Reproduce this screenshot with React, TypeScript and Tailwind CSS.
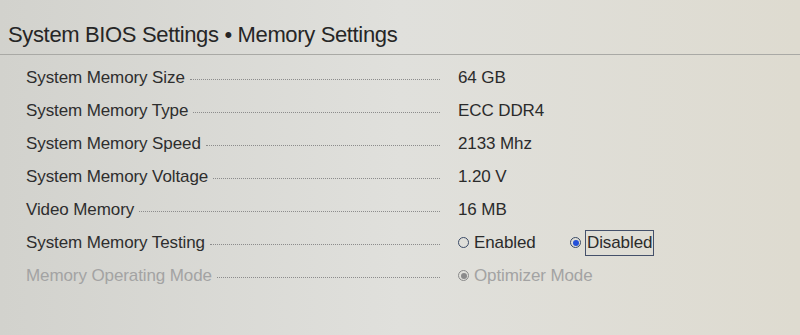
import React from "react";

type Row = { label: string; value?: string; kind?: "text" | "radio" | "disabled" };

const rows: Row[] = [
  { label: "System Memory Size", value: "64 GB" },
  { label: "System Memory Type", value: "ECC DDR4" },
  { label: "System Memory Speed", value: "2133 Mhz" },
  { label: "System Memory Voltage", value: "1.20 V" },
  { label: "Video Memory", value: "16 MB" },
  { label: "System Memory Testing", kind: "radio" },
  { label: "Memory Operating Mode", kind: "disabled" },
];

const Radio = ({ checked, muted }: { checked?: boolean; muted?: boolean }) => (
  <span
    className={
      "inline-flex items-center justify-center w-[11px] h-[11px] rounded-full border " +
      (muted ? "border-[#8a8a8a]" : "border-[#3a4a66]")
    }
  >
    {checked && (
      <span className={"w-[6px] h-[6px] rounded-full " + (muted ? "bg-[#8a8a8a]" : "bg-[#2450d8]")} />
    )}
  </span>
);

export default function App() {
  return (
    <div
      className="w-[800px] h-[335px] overflow-hidden bg-gradient-to-r from-[#d2d2cd] via-[#e0e0dc] to-[#dedbd0] text-[#2b2b2b]"
      style={{ fontFamily: '"Liberation Sans", Arial, sans-serif' }}
    >
      <div className="h-[55px] flex items-end pl-[8px] pb-[8px] border-b border-[#a9a9a5]">
        <h1 className="text-[22px] leading-none tracking-[-0.35px] text-[#262626]">
          System BIOS Settings • Memory Settings
        </h1>
      </div>
      <div className="pt-[6px] pl-[26px]">
        {rows.map((r) => {
          const muted = r.kind === "disabled";
          return (
            <div key={r.label} className="h-[33px] flex items-center text-[17px] tracking-[-0.1px]">
              <div className="w-[414px] flex items-center gap-[5px]">
                <span className={"whitespace-nowrap " + (muted ? "text-[#a3a3a3]" : "text-[#2e2e2e]")}>
                  {r.label}
                </span>
                <span className="flex-1 border-b border-dotted border-[#8c8c8c] translate-y-[2px]" />
              </div>
              <div className="pl-[18px] flex items-center">
                {r.kind === "radio" ? (
                  <div className="flex items-center">
                    <div className="flex items-center gap-[5px] w-[112px]">
                      <Radio />
                      <span>Enabled</span>
                    </div>
                    <div className="flex items-center gap-[4px]">
                      <Radio checked />
                      <span className="border border-[#44506a] px-[1px] leading-[24px] h-[26px]">Disabled</span>
                    </div>
                  </div>
                ) : muted ? (
                  <div className="flex items-center gap-[5px] text-[#a3a3a3]">
                    <Radio checked muted />
                    <span>Optimizer Mode</span>
                  </div>
                ) : (
                  <span>{r.value}</span>
                )}
              </div>
            </div>
          );
        })}
      </div>
    </div>
  );
}
